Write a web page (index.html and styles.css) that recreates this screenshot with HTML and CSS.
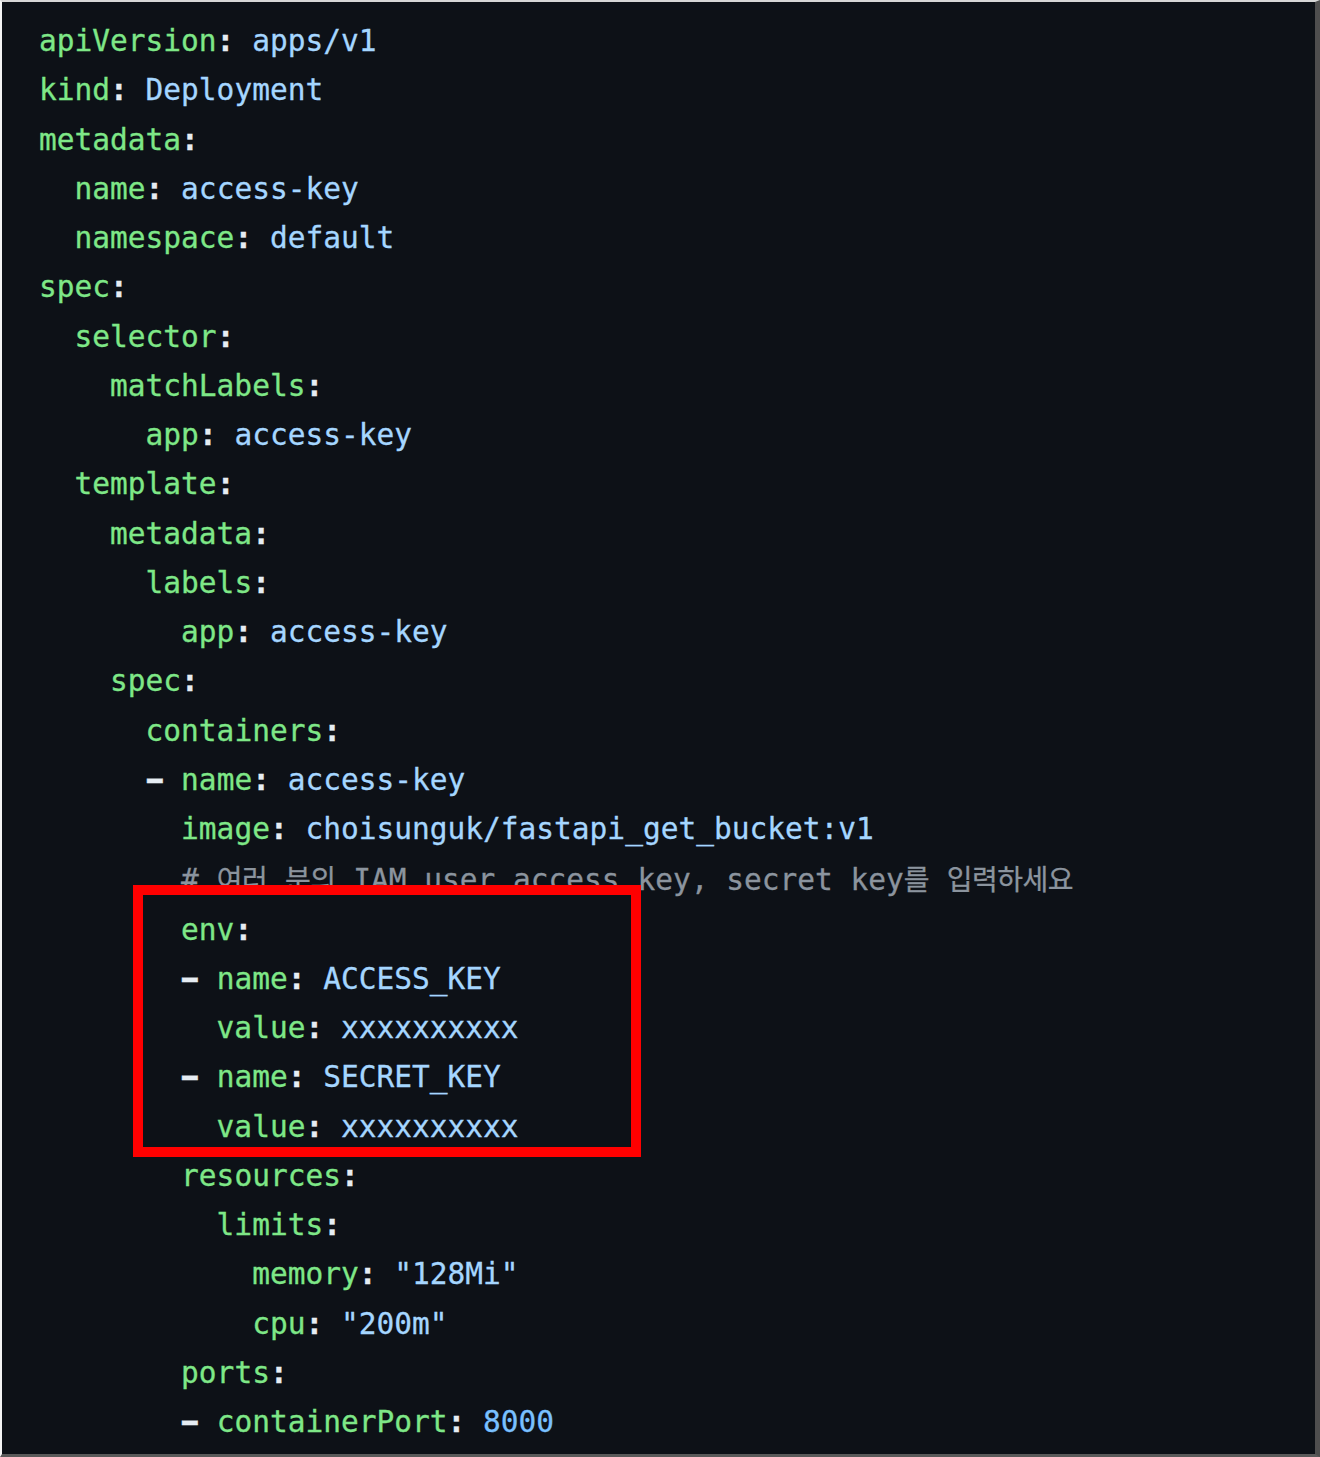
FILE: index.html
```html
<!DOCTYPE html>
<html lang="ko">
<head>
<meta charset="utf-8">
<title>deployment.yaml</title>
<link rel="stylesheet" href="styles.css">
</head>
<body>
<div class="frame">
<pre class="code"><span class="k">apiVersion</span><span class="p">:</span> <span class="v">apps/v1</span>
<span class="k">kind</span><span class="p">:</span> <span class="v">Deployment</span>
<span class="k">metadata</span><span class="p">:</span>
  <span class="k">name</span><span class="p">:</span> <span class="v">access-key</span>
  <span class="k">namespace</span><span class="p">:</span> <span class="v">default</span>
<span class="k">spec</span><span class="p">:</span>
  <span class="k">selector</span><span class="p">:</span>
    <span class="k">matchLabels</span><span class="p">:</span>
      <span class="k">app</span><span class="p">:</span> <span class="v">access-key</span>
  <span class="k">template</span><span class="p">:</span>
    <span class="k">metadata</span><span class="p">:</span>
      <span class="k">labels</span><span class="p">:</span>
        <span class="k">app</span><span class="p">:</span> <span class="v">access-key</span>
    <span class="k">spec</span><span class="p">:</span>
      <span class="k">containers</span><span class="p">:</span>
      <span class="d">-</span> <span class="k">name</span><span class="p">:</span> <span class="v">access-key</span>
        <span class="k">image</span><span class="p">:</span> <span class="v">choisunguk/fastapi_get_bucket:v1</span>
        <span class="c"># <span class="ko">여러</span> <span class="ko">분의</span> IAM user access key, secret key<span class="ko">를</span> <span class="ko">입력하세요</span></span>
        <span class="k">env</span><span class="p">:</span>
        <span class="d">-</span> <span class="k">name</span><span class="p">:</span> <span class="v">ACCESS_KEY</span>
          <span class="k">value</span><span class="p">:</span> <span class="v">xxxxxxxxxx</span>
        <span class="d">-</span> <span class="k">name</span><span class="p">:</span> <span class="v">SECRET_KEY</span>
          <span class="k">value</span><span class="p">:</span> <span class="v">xxxxxxxxxx</span>
        <span class="k">resources</span><span class="p">:</span>
          <span class="k">limits</span><span class="p">:</span>
            <span class="k">memory</span><span class="p">:</span> <span class="v">"128Mi"</span>
            <span class="k">cpu</span><span class="p">:</span> <span class="v">"200m"</span>
        <span class="k">ports</span><span class="p">:</span>
        <span class="d">-</span> <span class="k">containerPort</span><span class="p">:</span> <span class="n">8000</span></pre>
<div class="highlight"></div>
</div>
</body>
</html>
```

FILE: styles.css
```css
html, body {
  margin: 0;
  padding: 0;
  background: #5a5a5a;
}

.frame {
  position: relative;
  width: 1313px;
  height: 1452px;
  background: #0d1117;
  border-top: 2px solid #d6d6d6;
  border-left: 2px solid #f4f4f4;
  border-right: 5px solid #4e4e4e;
  border-bottom: 3px solid #5a5a5a;
  overflow: hidden;
}

.code {
  margin: 0;
  padding: 15px 0 0 37px;
  font-family: "DejaVu Sans Mono", "Liberation Mono", "Noto Sans CJK KR", monospace;
  font-size: 29.5px;
  line-height: 49.25px;
  color: #e6edf3;
  white-space: pre;
  -webkit-text-stroke: 0.3px currentColor;
}

.k { color: #7ee787; }
.v { color: #a5d6ff; }
.n { color: #79c0ff; }
.p { color: #e6edf3; font-weight: bold; }
.c { color: #8b949e; }

.d {
  display: inline-block;
  color: #e6edf3;
  font-weight: bold;
  transform: scaleX(1.7);
}

.ko {
  font-family: "Noto Sans CJK KR", sans-serif;
  font-size: 28px;
  letter-spacing: -0.5px;
}

.highlight {
  position: absolute;
  left: 131px;
  top: 883px;
  width: 488px;
  height: 252px;
  border: 10px solid #ff0000;
}
```
